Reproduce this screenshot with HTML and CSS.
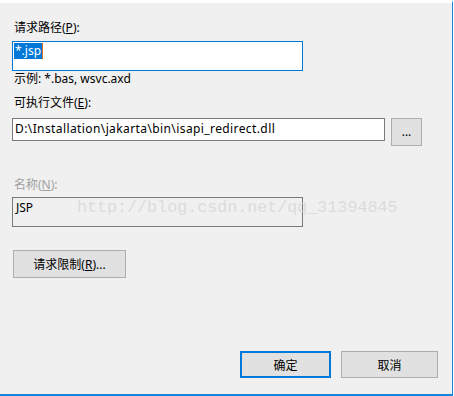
FILE: index.html
```html
<!DOCTYPE html>
<html lang="zh-CN">
<head>
<meta charset="UTF-8">
<title>添加模块映射</title>
<link rel="stylesheet" href="styles.css">
</head>
<body>

<div class="dialog">
    <div class="label">请求路径(<u>P</u>):</div>
    <div class="field field-focus"><span class="selected">*.jsp</span></div>
    <div class="hint">示例: *.bas, wsvc.axd</div>

    <div class="label label-gap">可执行文件(<u>E</u>):</div>
    <div class="file-row">
        <div class="field field-file">D:\Installation\jakarta\bin\isapi_redirect.dll</div>
        <button type="button" class="btn btn-browse">...</button>
    </div>

    <div class="label label-disabled">名称(<u>N</u>):</div>
    <div class="field field-disabled">JSP</div>

    <button type="button" class="btn btn-limits">请求限制(<u>R</u>)...</button>

    <div class="footer">
        <button type="button" class="btn btn-ok">确定</button>
        <button type="button" class="btn btn-cancel">取消</button>
    </div>

    <div class="watermark">http://blog.csdn.net/qq_31394845</div>
</div>

</body>
</html>
```

FILE: styles.css
```css
body {
    margin: 0;
    background: #fff;
    font-family: "Noto Sans", "Noto Sans CJK SC", sans-serif;
    font-size: 12px;
    color: #000;
}
.dialog {
    position: relative;
    box-sizing: border-box;
    width: 453px;
    height: 396px;
    display: flex;
    flex-direction: column;
    align-items: flex-start;
    padding: 17px 14px 16px 12px;
    background: #f0f0f0;
    border-top: 3px solid #fff;
    border-right: 1px solid #1883d7;
    border-bottom: 2px solid #1883d7;
}
.label {
    line-height: 16px;
    padding-left: 2px;
}
.label u {
    text-underline-offset: 1px;
}
.label-gap {
    margin-top: 8px;
}
.label-disabled {
    margin-top: 31px;
    color: #a0a0a0;
}
.field {
    box-sizing: border-box;
    background: #fff;
    border: 1px solid #7a7a7a;
    line-height: 16px;
    white-space: nowrap;
}
.field-focus {
    width: 291px;
    height: 30px;
    margin-top: 5px;
    padding: 1px 0 0 1px;
    border-color: #0078d7;
}
.selected {
    display: inline-block;
    padding: 0 1px;
    background: #0078d7;
    color: #fff;
    border-right: 1px solid #e07020;
}
.hint {
    line-height: 16px;
    padding-left: 2px;
}
.file-row {
    display: flex;
    align-items: flex-start;
    margin-top: 7px;
}
.field-file {
    width: 373px;
    height: 23px;
    padding: 2px 0 0 2px;
    letter-spacing: 0.4px;
}
.field-disabled {
    width: 291px;
    height: 30px;
    margin-top: 4px;
    padding: 2px 0 0 3px;
    background: #f0f0f0;
}
.btn {
    box-sizing: border-box;
    height: 28px;
    padding: 0;
    background: #e1e1e1;
    border: 1px solid #adadad;
    font: inherit;
    color: #000;
}
.btn-browse {
    width: 31px;
    margin-left: 6px;
    line-height: 14px;
}
.btn-limits {
    width: 113px;
    margin: 23px 0 0 1px;
}
.footer {
    display: flex;
    gap: 10px;
    margin-top: auto;
    align-self: flex-end;
}
.btn-ok {
    width: 91px;
    height: 27px;
    border: 2px solid #0078d7;
}
.btn-cancel {
    width: 97px;
    height: 27px;
}
.watermark {
    position: absolute;
    left: 77px;
    top: 194px;
    font-family: "Liberation Mono", monospace;
    font-size: 16.7px;
    line-height: 22px;
    color: #dcdcdc;
    white-space: nowrap;
}
```
